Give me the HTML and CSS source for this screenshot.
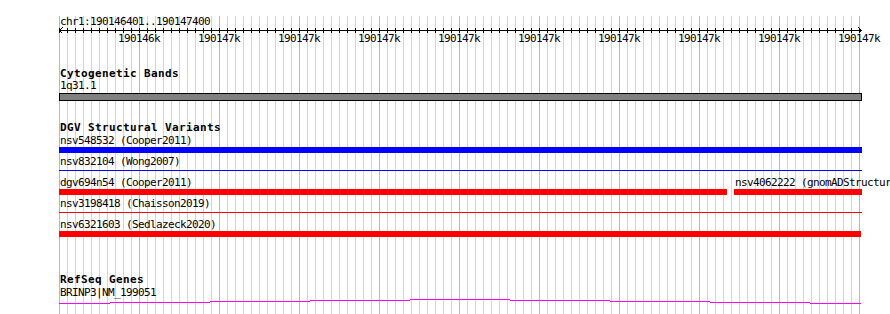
FILE: index.html
```html
<!DOCTYPE html>
<html lang="en">
<head>
  <meta charset="UTF-8">
  <title>chr1:190146401..190147400</title>
  <link rel="stylesheet" href="styles.css">
</head>
<body>
  <div class="panel">
    <!-- ruler -->
    <div class="ruler">
      <div class="ruler-name">chr1:190146401..190147400</div>
      <svg class="axis" width="803" height="7" viewBox="0 0 803 7" shape-rendering="crispEdges">
        <defs>
          <pattern id="tick" width="8" height="7" patternUnits="userSpaceOnUse">
            <rect x="0" y="2" width="1" height="5" fill="#000"/>
          </pattern>
        </defs>
        <rect x="0" y="0" width="801" height="7" fill="url(#tick)"/>
        <rect x="0" y="4" width="803" height="1" fill="#000"/>
        <path d="M0.5 4.5L3.5 1.5M0.5 4.5L3.5 7.5M802.5 4.5L799.5 1.5M802.5 4.5L799.5 7.5" stroke="#000" fill="none"/>
      </svg>
      <div class="ticks">
        <span>190146k</span><span>190147k</span><span>190147k</span><span>190147k</span><span>190147k</span>
        <span>190147k</span><span>190147k</span><span>190147k</span><span>190147k</span><span>190147k</span>
      </div>
    </div>

    <!-- cytogenetic bands -->
    <section class="track track-cyto">
      <h2 class="track-title">Cytogenetic Bands</h2>
      <div class="feature">
        <div class="label">1q31.1</div>
        <div class="band"></div>
      </div>
    </section>

    <!-- DGV -->
    <section class="track track-dgv">
      <h2 class="track-title">DGV Structural Variants</h2>
      <div class="rows">
        <div class="row">
          <div class="feature">
            <div class="label">nsv548532 (Cooper2011)</div>
            <div class="bar bar-blue"></div>
          </div>
        </div>
        <div class="row">
          <div class="feature">
            <div class="label">nsv832104 (Wong2007)</div>
            <div class="line line-blue"></div>
          </div>
        </div>
        <div class="row">
          <div class="feature feature-dgv694">
            <div class="label">dgv694n54 (Cooper2011)</div>
            <div class="bar bar-red"></div>
          </div>
          <div class="feature feature-nsv406">
            <div class="label">nsv4062222 (gnomADStructuralVariants)</div>
            <div class="bar bar-red"></div>
          </div>
        </div>
        <div class="row">
          <div class="feature">
            <div class="label">nsv3198418 (Chaisson2019)</div>
            <div class="line line-red"></div>
          </div>
        </div>
        <div class="row">
          <div class="feature feature-short">
            <div class="label">nsv6321603 (Sedlazeck2020)</div>
            <div class="bar bar-red"></div>
          </div>
        </div>
      </div>
    </section>

    <!-- genes -->
    <section class="track track-genes">
      <h2 class="track-title">RefSeq Genes</h2>
      <div class="feature gene-feature">
        <div class="label">BRINP3|NM_199051</div>
        <svg class="gene" width="803" height="5" viewBox="0 0 803 5" shape-rendering="crispEdges">
          <path d="M0 4.5H51M51 3.5H151M151 2.5H251M251 1.5H351M351 0.5H451M451 1.5H551M551 2.5H651M651 3.5H751M751 4.5H802" stroke="#ff00ff" fill="none"/>
        </svg>
      </div>
    </section>
  </div>
</body>
</html>
```

FILE: styles.css
```css
/* reset */
* { margin: 0; padding: 0; box-sizing: border-box; }
html, body {
  width: 890px;
  height: 314px;
  overflow: hidden;
  background: #fff;
}
body {
  font-family: "DejaVu Sans Mono", "Liberation Mono", monospace;
  font-size: 11px;
  letter-spacing: -0.62px;
  line-height: 12px;
  color: #000;
}

/* grid panel */
.panel {
  margin-left: 59px;
  width: 803px;
  height: 314px;
  background-image:
    repeating-linear-gradient(to right, #8ec4e6 0 1px, transparent 1px 80px),
    repeating-linear-gradient(to right, #b0e4e8 0 1px, transparent 1px 8px);
  background-size: 801px 100%;
  background-repeat: no-repeat;
}

/* ruler */
.ruler-name {
  margin-top: 16px;
  height: 10px;
  padding-left: 1px;
  white-space: nowrap;
}
.axis {
  display: block;
  overflow: visible;
}
.ticks {
  display: flex;
  margin-left: 40px;
  height: 12px;
}
.ticks span {
  flex: none;
  width: 80px;
  text-align: center;
}

/* tracks */
.track-title {
  font-size: 11px;
  font-weight: bold;
  letter-spacing: 0.38px;
  line-height: 12px;
  height: 12px;
  padding-left: 1px;
  white-space: nowrap;
}
.track-cyto { margin-top: 23px; }
.track-dgv { margin-top: 21px; }
.track-genes { margin-top: 34px; }

.label {
  height: 12px;
  padding-left: 1px;
  white-space: nowrap;
}

.band {
  margin-top: 1px;
  height: 8px;
  border: 1px solid #000;
  background: #808080;
}

.rows { margin-top: 1px; }
.row {
  display: flex;
  padding-bottom: 3px;
}
.row .feature { width: 803px; flex: none; }
.row .feature-dgv694 { width: 668px; }
.row .feature-nsv406 { width: 128px; margin-left: 7px; }
.row .feature-short { width: 802px; }

.bar { height: 6px; }
.bar-blue { background: #0000ff; }
.bar-red { background: #ff0000; }
.line {
  height: 1px;
  margin: 2px 0 3px;
}
.line-blue { background: #0000ff; }
.line-red { background: #ff0000; }

.gene-feature { margin-top: 1px; }
.gene { display: block; }
```
